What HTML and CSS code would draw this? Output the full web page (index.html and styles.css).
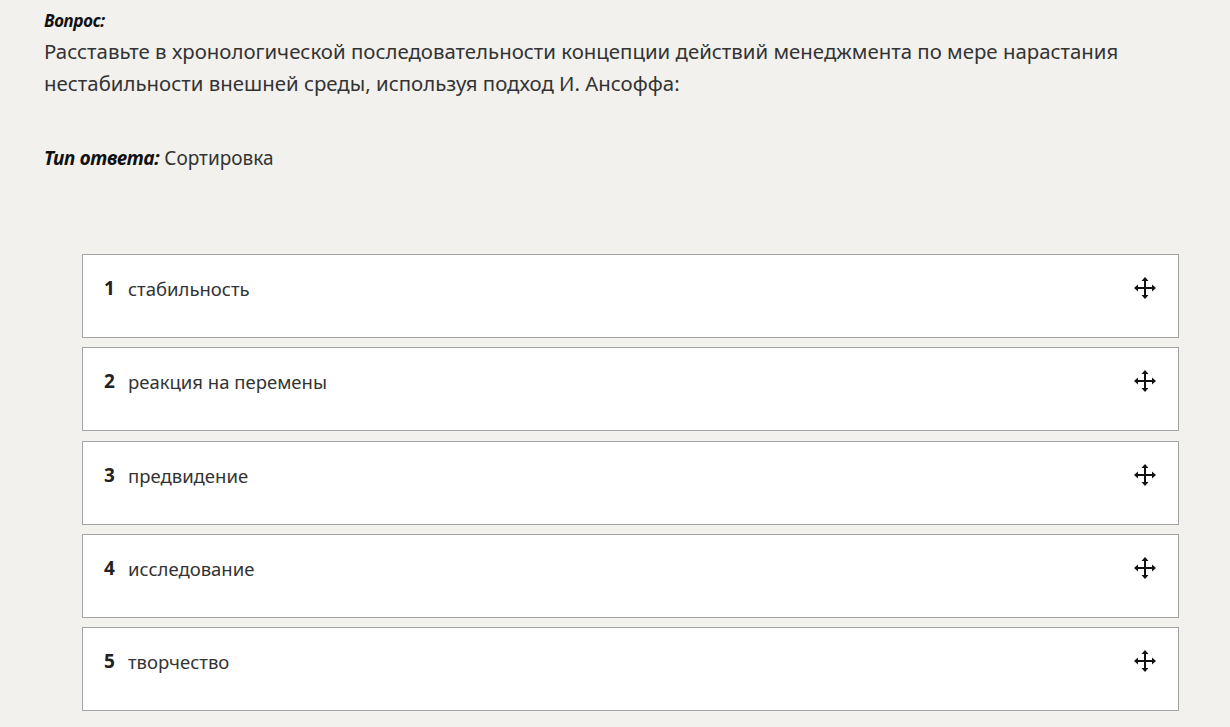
FILE: index.html
```html
<!DOCTYPE html>
<html lang="ru">
<head>
    <meta charset="UTF-8">
    <title>Вопрос</title>
    <link rel="stylesheet" href="styles.css">
</head>
<body>
    <div class="question">
        <div class="label">Вопрос:</div>
        <div class="text">Расставьте в хронологической последовательности концепции действий менеджмента по мере нарастания нестабильности внешней среды, используя подход И. Ансоффа:</div>
        <div class="answer-type"><span class="label">Тип ответа:</span> Сортировка</div>

        <ul class="sort-list">
            <li class="sort-item"><span class="num">1</span><span class="name">стабильность</span>
                <svg class="move" viewBox="0 0 24 24"><path d="M12 3v18M3 12h18"/><path class="head" d="M12 1l-3.5 4h7zM12 23l-3.5-4h7zM1 12l4-3.5v7zM23 12l-4-3.5v7z"/></svg></li>
            <li class="sort-item"><span class="num">2</span><span class="name">реакция на перемены</span>
                <svg class="move" viewBox="0 0 24 24"><path d="M12 3v18M3 12h18"/><path class="head" d="M12 1l-3.5 4h7zM12 23l-3.5-4h7zM1 12l4-3.5v7zM23 12l-4-3.5v7z"/></svg></li>
            <li class="sort-item"><span class="num">3</span><span class="name">предвидение</span>
                <svg class="move" viewBox="0 0 24 24"><path d="M12 3v18M3 12h18"/><path class="head" d="M12 1l-3.5 4h7zM12 23l-3.5-4h7zM1 12l4-3.5v7zM23 12l-4-3.5v7z"/></svg></li>
            <li class="sort-item"><span class="num">4</span><span class="name">исследование</span>
                <svg class="move" viewBox="0 0 24 24"><path d="M12 3v18M3 12h18"/><path class="head" d="M12 1l-3.5 4h7zM12 23l-3.5-4h7zM1 12l4-3.5v7zM23 12l-4-3.5v7z"/></svg></li>
            <li class="sort-item"><span class="num">5</span><span class="name">творчество</span>
                <svg class="move" viewBox="0 0 24 24"><path d="M12 3v18M3 12h18"/><path class="head" d="M12 1l-3.5 4h7zM12 23l-3.5-4h7zM1 12l4-3.5v7zM23 12l-4-3.5v7z"/></svg></li>
        </ul>
    </div>
</body>
</html>
```

FILE: styles.css
```css
body {
    margin: 0;
    background-color: #f2f1ee;
    font-family: "Noto Sans", "Open Sans", sans-serif;
    color: #333;
}
.question {
    padding: 9px 51px 0 44px;
}
.label {
    font-weight: bold;
    font-style: italic;
    color: #111;
    font-size: 17px;
    letter-spacing: -0.3px;
}
.text {
    font-size: 20.4px;
    line-height: 32px;
    margin-top: 3px;
}
.answer-type {
    margin-top: 46px;
    font-size: 19px;
}
.answer-type .label {
    font-size: 19px;
}
.sort-list {
    list-style: none;
    margin: 83px 0 0 38px;
    padding: 0;
}
.sort-item {
    display: flex;
    align-items: flex-start;
    background-color: #fff;
    border: 1px solid #a3a3a3;
    box-sizing: border-box;
    height: 84px;
    padding: 20px 20px 0 21px;
    margin-bottom: 9.3px;
    font-size: 18.5px;
}
.num {
    font-weight: bold;
    font-size: 19px;
    color: #222;
    width: 24px;
}
.name {
    flex: 1;
    line-height: 28px;
}
.move {
    width: 24px;
    height: 24px;
    margin: 1px 1px 0 0;
}
.move path {
    stroke: #111;
    stroke-width: 2;
    fill: none;
}
.move path.head {
    stroke: none;
    fill: #111;
}
```
